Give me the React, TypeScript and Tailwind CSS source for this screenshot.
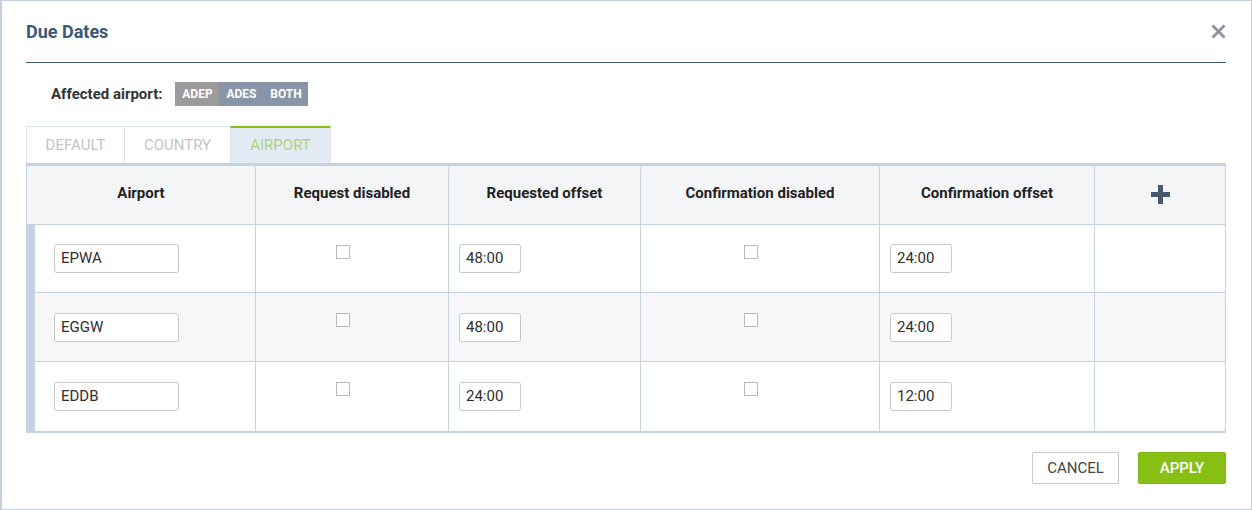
import React from "react";

const rows = [
  { code: "EPWA", req: "48:00", conf: "24:00", bg: "bg-white", h: "h-[68px]" },
  { code: "EGGW", req: "48:00", conf: "24:00", bg: "bg-[#f7f7f7]", h: "h-[69px]" },
  { code: "EDDB", req: "24:00", conf: "12:00", bg: "bg-white", h: "h-[69px]" },
];

const cols = "grid grid-cols-[229px_193px_192px_239px_215px_130px]";

function Checkbox() {
  return <div className="w-[14px] h-[14px] border border-[#b9b9b9] bg-white mr-[19px]" />;
}

function TextInput({ value, w }: { value: string; w: string }) {
  return (
    <div className={`${w} h-[29px] border border-[#c8c8c8] rounded-[3px] bg-white flex items-center pl-[6px] text-[15px] text-[#2f2f2f]`}>
      {value}
    </div>
  );
}

export default function App() {
  return (
    <div
      className="w-[1252px] h-[510px] bg-white border border-l-2 border-[#c4cfdd] pl-[24px] pr-[25px] flex flex-col"
      style={{ fontFamily: "Roboto, 'Liberation Sans', sans-serif" }}
    >
      {/* Header */}
      <div className="h-[62px] border-b border-[#3f5b7b] flex items-center justify-between">
        <div className="text-[18px] font-bold text-[#3d5875]">Due Dates</div>
        <svg width="15" height="15" viewBox="0 0 15 15" className="-mt-[1px]">
          <path d="M1.5 1.5 L13.5 13.5 M13.5 1.5 L1.5 13.5" stroke="#8893a0" strokeWidth="2.8" strokeLinecap="butt" />
        </svg>
      </div>

      {/* Affected airport */}
      <div className="mt-[19px] h-[24px] pl-[25px] flex items-center">
        <span className="text-[15px] font-bold text-[#333] mr-[13px]">Affected airport:</span>
        <div className="flex h-[24px] text-[12px] font-bold text-white">
          <div className="w-[44px] bg-[#9b9b9b] flex items-center justify-center">ADEP</div>
          <div className="w-[44px] bg-[#8895a8] flex items-center justify-center">ADES</div>
          <div className="w-[45px] bg-[#8895a8] flex items-center justify-center">BOTH</div>
        </div>
      </div>

      {/* Tabs */}
      <div className="mt-[20px] flex h-[37px] text-[15px]">
        <div className="w-[98px] border-t border-l border-[#dde4ec] text-[#c4c4c4] flex items-center justify-center">DEFAULT</div>
        <div className="w-[106px] border-t border-l border-[#dde4ec] text-[#c4c4c4] flex items-center justify-center">COUNTRY</div>
        <div className="w-[101px] border-t-2 border-t-[#86c015] border-x border-x-[#dde4ec] bg-[#e3ebf4] text-[#a9d37b] flex items-center justify-center pb-[1px]">AIRPORT</div>
      </div>

      {/* Table */}
      <div className="w-[1200px] border-t-[3px] border-b-2 border-x border-[#c5d2e2]">
        <div className={`${cols} h-[59px] bg-[#f4f5f7] border-b border-[#c5d2e2] text-[15px] font-bold text-[#222]`}>
          <div className="border-r border-[#c5d2e2] flex items-center justify-center pb-[3px]">Airport</div>
          <div className="border-r border-[#c5d2e2] flex items-center justify-center pb-[3px]">Request disabled</div>
          <div className="border-r border-[#c5d2e2] flex items-center justify-center pb-[3px]">Requested offset</div>
          <div className="border-r border-[#c5d2e2] flex items-center justify-center pb-[3px]">Confirmation disabled</div>
          <div className="border-r border-[#c5d2e2] flex items-center justify-center pb-[3px]">Confirmation offset</div>
          <div className="flex items-center justify-center pb-[2px]">
            <svg width="19" height="19" viewBox="0 0 19 19">
              <rect x="7" y="0" width="5" height="19" fill="#47596f" />
              <rect x="0" y="7" width="19" height="5" fill="#47596f" />
            </svg>
          </div>
        </div>
        {rows.map((r, i) => (
          <div
            key={r.code}
            className={`${cols} ${r.h} ${r.bg} ${i < rows.length - 1 ? "border-b border-[#c5d2e2]" : ""}`}
          >
            <div className="border-r border-[#c5d2e2] flex items-center">
              <div className="w-[9px] self-stretch bg-[#c5d2e3] -ml-px mr-[19px]" />
              <TextInput value={r.code} w="w-[125px]" />
            </div>
            <div className="border-r border-[#c5d2e2] flex justify-center pt-[20px]">
              <Checkbox />
            </div>
            <div className="border-r border-[#c5d2e2] flex items-center pl-[10px]">
              <TextInput value={r.req} w="w-[62px]" />
            </div>
            <div className="border-r border-[#c5d2e2] flex justify-center pt-[20px]">
              <Checkbox />
            </div>
            <div className="border-r border-[#c5d2e2] flex items-center pl-[10px]">
              <TextInput value={r.conf} w="w-[62px]" />
            </div>
            <div />
          </div>
        ))}
      </div>

      {/* Footer */}
      <div className="mt-[19px] flex justify-end gap-[19px]">
        <button className="w-[87px] h-[32px] border border-[#c8c8c8] rounded-[2px] bg-white text-[15px] text-[#444]">
          CANCEL
        </button>
        <button className="w-[88px] h-[32px] border border-[#7fb60f] rounded-[2px] bg-[#86c015] text-[15px] font-medium text-white">
          APPLY
        </button>
      </div>
    </div>
  );
}
